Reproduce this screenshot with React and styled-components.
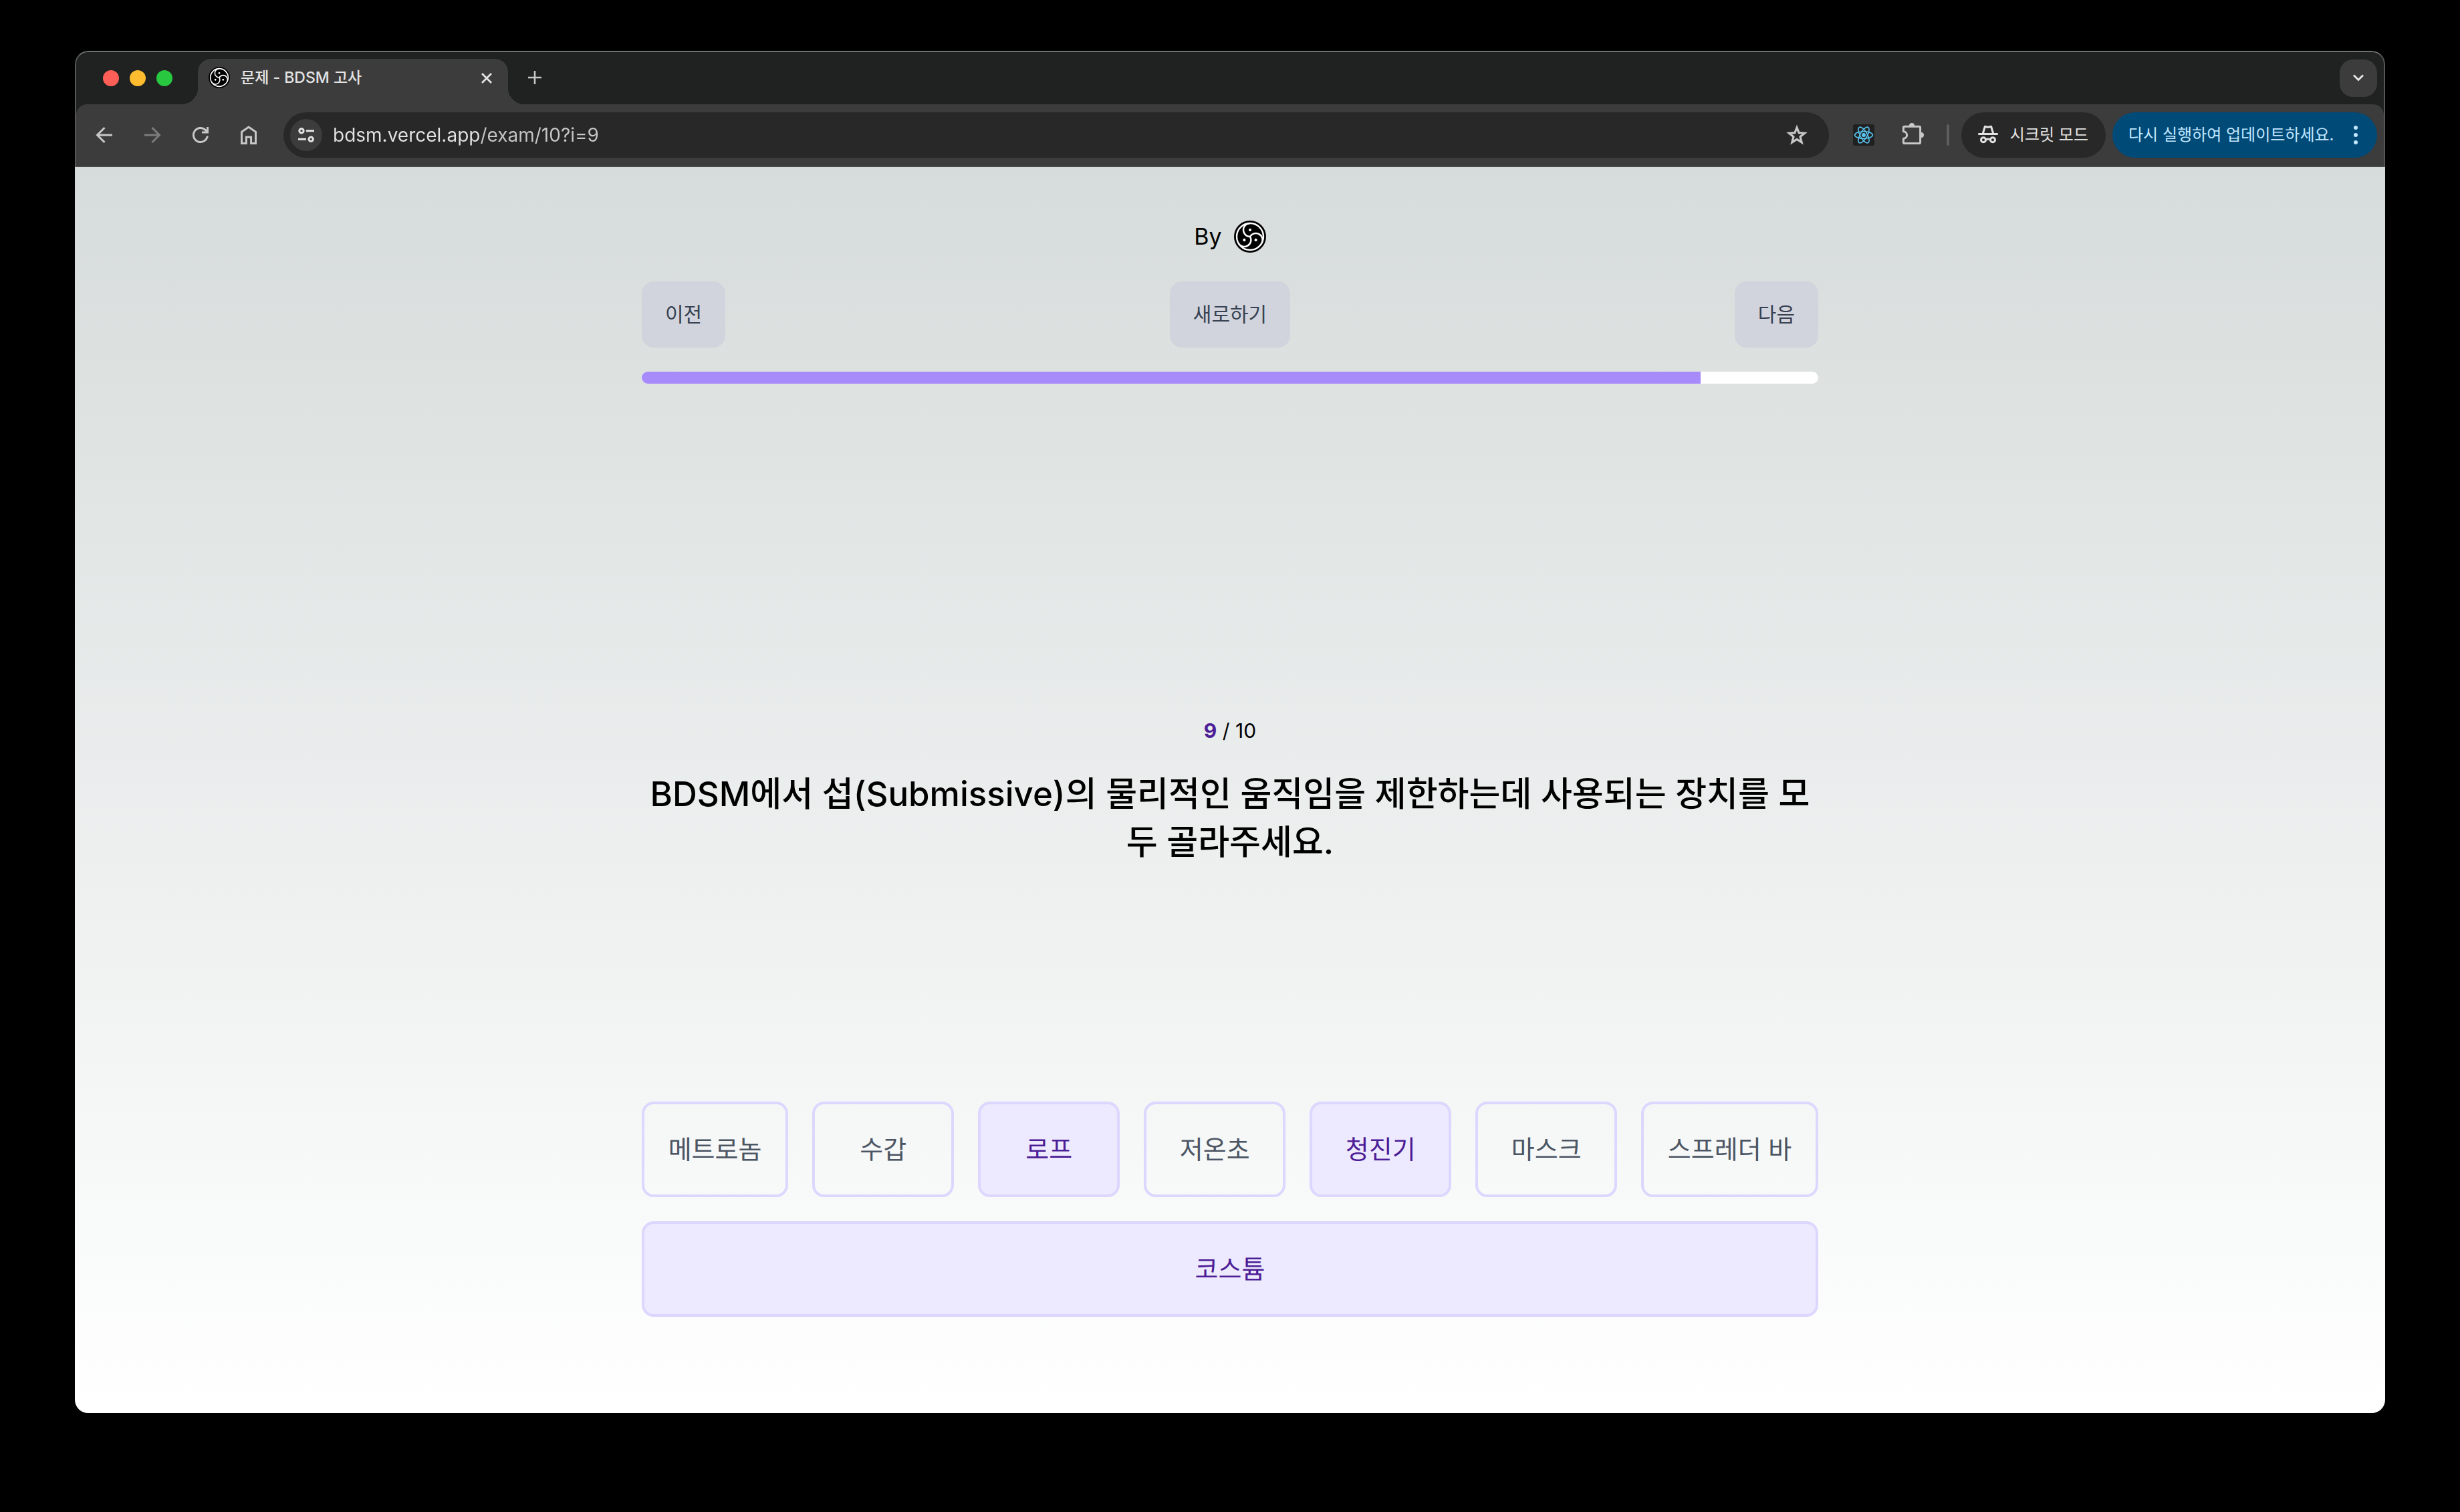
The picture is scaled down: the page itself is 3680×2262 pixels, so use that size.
import React, { useState } from "react";
import styled, { createGlobalStyle, css } from "styled-components";

const GlobalStyle = createGlobalStyle`
  *, *::before, *::after { box-sizing: border-box; }
  body {
    margin: 0;
    background: #000;
    font-family: Inter, "Noto Sans CJK KR", sans-serif;
  }
  button, input { font-family: inherit; margin: 0; }
  button { border: 0; padding: 0; background: none; cursor: pointer; }
  svg { display: block; flex: none; }
`;

const Desktop = styled.div`
  display: flex;
  min-height: 100vh;
  padding: 76px 112px 148px;
`;

const BrowserWindow = styled.div`
  flex: 1;
  min-width: 0;
  display: flex;
  flex-direction: column;
  border-radius: 20px;
  overflow: hidden;
`;

const Chrome = styled.header`
  background: #202221;
  border: 2px solid #555756;
  border-top-color: #6e706f;
  border-bottom: 0;
  border-radius: 20px 20px 0 0;
`;

const TabStrip = styled.div`
  display: flex;
  align-items: center;
  height: 78px;
  padding: 0 10px 0 40px;
`;

const TrafficLights = styled.div`
  display: flex;
  gap: 16px;
  margin-right: 38px;
`;

const TrafficLight = styled.button`
  width: 24px;
  height: 24px;
  border-radius: 50%;
  background: ${(p) => p.$color};
`;

const Tab = styled.div`
  position: relative;
  align-self: flex-end;
  display: flex;
  align-items: center;
  gap: 16px;
  width: 464px;
  height: 68px;
  padding: 0 18px 12px 16px;
  border-radius: 20px 20px 0 0;
  background: #3c3c3c;
  color: #e3e3e3;

  &::before,
  &::after {
    content: "";
    position: absolute;
    bottom: 0;
    width: 24px;
    height: 24px;
  }
  &::before {
    right: 100%;
    background: radial-gradient(circle at 0 0, transparent 24px, #3c3c3c 24px);
  }
  &::after {
    left: 100%;
    background: radial-gradient(circle at 100% 0, transparent 24px, #3c3c3c 24px);
  }
`;

const TabTitle = styled.span`
  flex: 1;
  font-size: 23px;
  line-height: 32px;
  font-weight: 500;
  white-space: nowrap;
`;

const SquareButton = styled.button`
  display: grid;
  place-items: center;
  width: ${(p) => p.$size}px;
  height: ${(p) => p.$size}px;
  color: #e3e3e3;
`;

const NewTabButton = styled(SquareButton)`
  margin-left: 12px;
  color: #c7c7c7;
`;

const TabSearchButton = styled(SquareButton)`
  margin-left: auto;
  border-radius: 20px;
  background: #3c3c3c;
`;

const Toolbar = styled.div`
  display: flex;
  align-items: center;
  height: 94px;
  padding: 12px 10px 12px 6px;
  border-bottom: 2px solid #4a4a4a;
  border-radius: 16px 16px 0 0;
  background: #3c3c3c;
`;

const ToolButton = styled.button`
  display: grid;
  place-items: center;
  width: 72px;
  height: 68px;
  color: ${(p) => (p.disabled ? "#7c7c7c" : "#c7c7c7")};
`;

const AddressBar = styled.div`
  flex: 1;
  display: flex;
  align-items: center;
  height: 68px;
  margin: 0 16px;
  padding: 0 30px 0 10px;
  border-radius: 34px;
  background: #282828;
`;

const SiteButton = styled(SquareButton)`
  border-radius: 50%;
  background: #3c3c3c;
`;

const BookmarkButton = styled(SquareButton)`
  color: #c7c7c7;
`;

const AddressInput = styled.input`
  flex: 1;
  min-width: 0;
  height: 48px;
  margin-left: 16px;
  padding: 0;
  border: 0;
  outline: 0;
  font-size: 28px;
  background: linear-gradient(90deg, #e3e3e3 220px, #c7c7c7 220px);
  background-clip: text;
  color: transparent;
`;

const Separator = styled.span`
  width: 4px;
  height: 32px;
  margin: 0 18px 0 16px;
  border-radius: 2px;
  background: #5e5e5e;
`;

const Pill = styled.button`
  display: flex;
  align-items: center;
  justify-content: space-between;
  height: 68px;
  border-radius: 34px;
  font-size: 24px;
  line-height: 32px;
  font-weight: 400;
  white-space: nowrap;
`;

const IncognitoPill = styled(Pill)`
  min-width: 216px;
  padding: 0 26px 0 22px;
  background: #282828;
  color: #e3e3e3;
`;

const UpdatePill = styled(Pill)`
  min-width: 396px;
  margin-left: 10px;
  padding: 0 14px 0 24px;
  background: #004a77;
  color: #c2e7ff;
`;

const Page = styled.main`
  flex: 1;
  display: flex;
  justify-content: center;
  padding: 72px 36px 144px;
  background: linear-gradient(#d6dcdb, #fff);
`;

const Exam = styled.div`
  flex: 1;
  max-width: 1760px;
  display: flex;
  flex-direction: column;
`;

const ExamHeader = styled.div`
  display: flex;
  flex-direction: column;
  gap: 36px;
`;

const Byline = styled.div`
  display: flex;
  align-items: center;
  justify-content: center;
  gap: 18px;
  height: 63px;
  font-size: 34px;
  color: #000;
`;

const StepNav = styled.nav`
  display: flex;
  justify-content: space-between;
`;

const StepButton = styled.button`
  padding: 0 35px;
  border-radius: 18px;
  background: #d1d4dc;
  color: #374151;
  font-size: 30px;
  line-height: 99px;
  font-weight: 400;
`;

const ProgressTrack = styled.div`
  height: 18px;
  border-radius: 9px;
  overflow: hidden;
  background: #fff;
`;

const ProgressFill = styled.div`
  height: 100%;
  background: #a78bfa;
`;

const Question = styled.section`
  flex: 1;
  display: flex;
  flex-direction: column;
  justify-content: center;
  gap: 36px;
  padding-top: 144px;
  text-align: center;
  color: #000;
`;

const Counter = styled.p`
  margin: 0;
  font-size: 30px;
  line-height: 46px;
`;

const CurrentNumber = styled.strong`
  font-weight: 700;
  color: #4c1d95;
`;

const QuestionText = styled.h1`
  margin: 0;
  font-size: 51px;
  line-height: 72px;
  font-weight: 500;
`;

const Options = styled.div`
  display: flex;
  flex-wrap: wrap;
  gap: 36px;
`;

const OptionButton = styled.button`
  flex: 1 1 auto;
  min-width: 212px;
  padding: 0 32px;
  border: 4px solid #ddd6fe;
  border-radius: 18px;
  color: #4b5563;
  font-size: 38px;
  line-height: 135px;
  font-weight: 400;
  white-space: nowrap;

  ${(p) =>
    p.$selected &&
    css`
      background: #ede9fe;
      color: #4c1d95;
    `}
`;

function Emblem({ size }) {
  return (
    <svg width={size} height={size} viewBox="-24 -24 48 48" aria-hidden="true">
      <circle r="24" fill="#000" />
      <g fill="none" stroke="#fff" strokeWidth="2.4">
        <circle r="20" />
        {[0, 120, 240].map((angle) => (
          <path key={angle} d="M0 0A10 10 0 0 1 0 -20" transform={`rotate(${angle})`} />
        ))}
      </g>
      {[0, 120, 240].map((angle) => (
        <circle key={angle} cy="-10" r="2.1" fill="#fff" transform={`rotate(${angle})`} />
      ))}
    </svg>
  );
}

function Glyph({ children, width = 3, ...rest }) {
  return (
    <svg
      width="36"
      height="36"
      viewBox="0 0 36 36"
      fill="none"
      stroke="currentColor"
      strokeWidth={width}
      aria-hidden="true"
      {...rest}
    >
      {children}
    </svg>
  );
}

const BackIcon = () => (
  <Glyph>
    <path d="M30 18H8M18.5 7L7.5 18L18.5 29" />
  </Glyph>
);

const ForwardIcon = () => (
  <Glyph>
    <path d="M6 18H28M17.5 7L28.5 18L17.5 29" />
  </Glyph>
);

const ReloadIcon = () => (
  <Glyph>
    <path d="M28.3 19.5A10.5 10.5 0 1 1 25.4 10.6L28 13.2" />
    <path d="M28.5 6V14H20" />
  </Glyph>
);

const HomeIcon = () => (
  <Glyph>
    <path d="M7.5 30.5V13.2L18 6L28.5 13.2V30.5H21.6V21H14.4V30.5Z" />
  </Glyph>
);

const TuneIcon = () => (
  <Glyph>
    <circle cx="11" cy="11.7" r="3.2" />
    <path d="M18 11.7H30M6 24.3H18" />
    <circle cx="25.2" cy="24.3" r="3.2" />
  </Glyph>
);

const starPoints = Array.from({ length: 10 }, (_, i) => {
  const radius = i % 2 ? 5.3 : 12.2;
  const angle = (i * Math.PI) / 5;
  return `${18 + radius * Math.sin(angle)},${19 - radius * Math.cos(angle)}`;
}).join(" ");

const StarIcon = () => (
  <Glyph width={3.2}>
    <polygon points={starPoints} strokeMiterlimit="10" />
  </Glyph>
);

const ReactIcon = () => (
  <svg width="32" height="32" viewBox="-16 -16 32 32" aria-hidden="true">
    <rect x="-16" y="-16" width="32" height="32" rx="3" fill="#202020" />
    <circle r="3" fill="#58c4f0" />
    <g fill="none" stroke="#58c4f0" strokeWidth="1.6">
      {[0, 60, 120].map((angle) => (
        <ellipse key={angle} rx="13.4" ry="5.2" transform={`rotate(${angle})`} />
      ))}
    </g>
  </svg>
);

const PuzzleIcon = () => (
  <Glyph>
    <path
      d="M7 5.2H29Q30.6 5.2 30.6 6.8V29Q30.6 30.6 29 30.6H7Q5.4 30.6 5.4 29V23.2A5 5 0 0 0 5.4 12.8V6.8Q5.4 5.2 7 5.2Z"
      strokeLinejoin="round"
    />
    <path d="M14 4A4 4 0 0 1 22 4ZM32 14A4 4 0 0 1 32 22Z" fill="currentColor" stroke="none" />
  </Glyph>
);

const IncognitoIcon = () => (
  <Glyph>
    <path d="M3.3 16.4H32.7" />
    <path d="M10.2 16L13.4 5.2L18 6.2L22.6 5.2L25.8 16" strokeLinejoin="round" />
    <circle cx="11" cy="25.3" r="3.5" />
    <circle cx="25" cy="25.3" r="3.5" />
    <path d="M14.5 25Q18 23 21.5 25" />
  </Glyph>
);

const DotsIcon = () => (
  <Glyph fill="currentColor" stroke="none">
    <circle cx="18" cy="7" r="3" />
    <circle cx="18" cy="18" r="3" />
    <circle cx="18" cy="29" r="3" />
  </Glyph>
);

const CloseIcon = () => (
  <Glyph width={2.8}>
    <path d="M11 10L25 24M25 10L11 24" />
  </Glyph>
);

const PlusIcon = () => (
  <Glyph width={2.6}>
    <path d="M18 7V27M8 17H28" />
  </Glyph>
);

const ChevronIcon = () => (
  <Glyph>
    <path d="M11 13.5L18 20.5L25 13.5" />
  </Glyph>
);

const choices = ["메트로놈", "수갑", "로프", "저온초", "청진기", "마스크", "스프레더 바", "코스튬"];
const lights = [
  ["닫기", "#ff5f57"],
  ["최소화", "#febc2e"],
  ["확대", "#28c840"],
];

export default function App() {
  const [selected, setSelected] = useState(["로프", "청진기", "코스튬"]);
  const current = 9;
  const total = 10;

  const toggle = (name) =>
    setSelected((list) =>
      list.includes(name) ? list.filter((item) => item !== name) : [...list, name]
    );

  return (
    <>
      <GlobalStyle />
      <Desktop>
        <BrowserWindow>
          <Chrome>
            <TabStrip>
              <TrafficLights>
                {lights.map(([name, color]) => (
                  <TrafficLight key={name} $color={color} aria-label={name} />
                ))}
              </TrafficLights>
              <Tab>
                <Emblem size={32} />
                <TabTitle>문제 - BDSM 고사</TabTitle>
                <SquareButton $size={32} aria-label="탭 닫기">
                  <CloseIcon />
                </SquareButton>
              </Tab>
              <NewTabButton $size={56} aria-label="새 탭">
                <PlusIcon />
              </NewTabButton>
              <TabSearchButton $size={56} aria-label="탭 검색">
                <ChevronIcon />
              </TabSearchButton>
            </TabStrip>
            <Toolbar>
              <ToolButton aria-label="뒤로">
                <BackIcon />
              </ToolButton>
              <ToolButton aria-label="앞으로" disabled>
                <ForwardIcon />
              </ToolButton>
              <ToolButton aria-label="새로고침">
                <ReloadIcon />
              </ToolButton>
              <ToolButton aria-label="홈">
                <HomeIcon />
              </ToolButton>
              <AddressBar>
                <SiteButton $size={48} aria-label="사이트 정보">
                  <TuneIcon />
                </SiteButton>
                <AddressInput
                  type="text"
                  aria-label="주소"
                  defaultValue="bdsm.vercel.app/exam/10?i=9"
                />
                <BookmarkButton $size={36} aria-label="북마크">
                  <StarIcon />
                </BookmarkButton>
              </AddressBar>
              <ToolButton aria-label="React">
                <ReactIcon />
              </ToolButton>
              <ToolButton aria-label="확장 프로그램">
                <PuzzleIcon />
              </ToolButton>
              <Separator />
              <IncognitoPill>
                <IncognitoIcon />
                시크릿 모드
              </IncognitoPill>
              <UpdatePill>
                다시 실행하여 업데이트하세요.
                <DotsIcon />
              </UpdatePill>
            </Toolbar>
          </Chrome>
          <Page>
            <Exam>
              <ExamHeader>
                <Byline>
                  By
                  <Emblem size={48} />
                </Byline>
                <StepNav>
                  <StepButton>이전</StepButton>
                  <StepButton>새로하기</StepButton>
                  <StepButton>다음</StepButton>
                </StepNav>
                <ProgressTrack
                  role="progressbar"
                  aria-label="진행률"
                  aria-valuenow={current}
                  aria-valuemin={0}
                  aria-valuemax={total}
                >
                  <ProgressFill style={{ width: `${(current / total) * 100}%` }} />
                </ProgressTrack>
              </ExamHeader>
              <Question>
                <Counter>
                  <CurrentNumber>{current}</CurrentNumber> / {total}
                </Counter>
                <QuestionText>
                  BDSM에서 섭(Submissive)의 물리적인 움직임을 제한하는데 사용되는 장치를 모두 골라주세요.
                </QuestionText>
              </Question>
              <Options>
                {choices.map((name) => (
                  <OptionButton
                    key={name}
                    $selected={selected.includes(name)}
                    aria-pressed={selected.includes(name)}
                    onClick={() => toggle(name)}
                  >
                    {name}
                  </OptionButton>
                ))}
              </Options>
            </Exam>
          </Page>
        </BrowserWindow>
      </Desktop>
    </>
  );
}
